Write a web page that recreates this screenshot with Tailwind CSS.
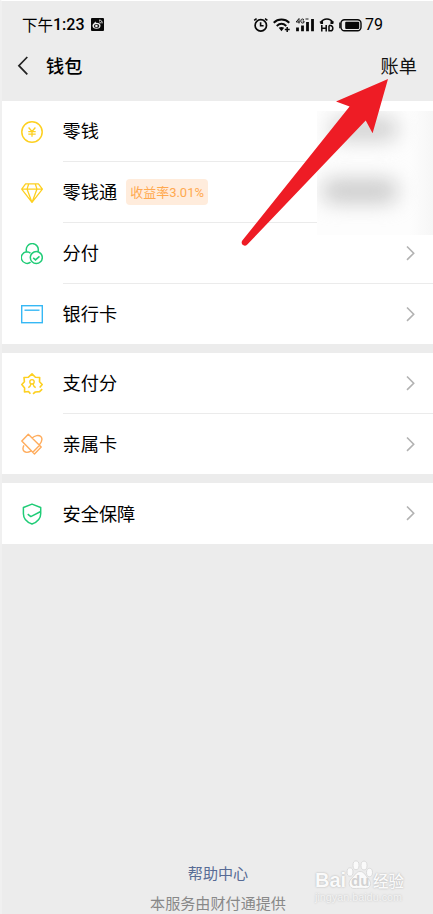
<!DOCTYPE html>
<html lang="zh-CN">
<head>
<meta charset="utf-8">
<title>钱包</title>
<script src="https://cdn.jsdelivr.net/npm/@tailwindcss/browser@4"></script>
</head>
<body class="bg-[#ececec]">
<div class="relative flex h-[914px] w-[433px] flex-col overflow-hidden border-t border-l-2 border-t-white border-l-[#f0f0f0] bg-[#ececec] font-['Noto_Sans_CJK_SC',sans-serif] text-black">
  <!-- status bar -->
  <div class="flex h-[46px] shrink-0 items-center pt-[1px] pl-[20px]">
    <div class="flex w-[63px] items-center whitespace-nowrap text-[15.5px] leading-6"><span class="pb-[1px]">下午</span><span class="font-[Roboto] text-[16px] font-medium">1:23</span></div>
    <svg class="ml-[6px] size-[13px]" viewBox="0 0 13 13" fill="none"><rect width="13" height="13" rx="1" fill="#080808"/><ellipse cx="5.5" cy="7.8" rx="4" ry="3" fill="#eee"/><ellipse cx="5.6" cy="8" rx="2.7" ry="2" fill="#111"/><circle cx="5.4" cy="8" r="1.3" fill="#eee"/><path d="M8 2.2c2-.4 3.5 1 3 3.2M8.2 4c1-.1 1.4.4 1.2 1.3M3 5.5l2-1.6" stroke="#eee"/></svg>
    <div class="ml-[149px] flex items-center text-black">
      <svg class="h-[16px] w-[112px]" viewBox="0 0 112 16" fill="none" stroke="#080808">
        <g stroke-width="1.7"><circle cx="7.8" cy="8.4" r="5.7"/><path d="M7.6 5.2v3.6h3" stroke-width="1.6"/><path d="M1.2 3.4 3.6 1.6M12 1.6l2.4 1.8" stroke-width="1.5"/></g>
        <path d="M20.7 5.7c4.3-4.2 11.3-4.2 15.6 0M23.7 9c2.9-2.6 6.7-2.6 9.6 0" stroke-width="1.9"/><path d="M25.7 10.8c1.8-1.2 3.7-1.2 5.5 0l-2.7 3.4z" fill="#080808" stroke="none"/><path d="M34.2 10v5M31.8 12.5h4.9" stroke-width="1.5"/>
        <path d="M44.5 10.5V14.3M49.5 8.5V14.3M54.5 5V14.3M59.5 2V14.3" stroke-width="2.8"/>
        <path d="M46 1.5 43.2 5h3.6M46 1.5v5M51 2.7c-1.7-1.5-3.2-.5-3.2 1.3 0 2 1.8 2.7 3.2 1.5V4h-1.4M52.5 2h3" stroke-width=".9"/>
        <path d="M68.1 7V5.2c2.4-4.2 9.2-4.2 11.5 0V7M66.8 5.1h2.5v2M78.2 7V5h2.5" stroke-width="1.5"/>
        <path d="M68.8 8v6.5M73.2 8v6.5M68.8 11.2h4.4M76 8.6v5.2h1.5c3.1 0 3.1-5.2 0-5.2H76" stroke-width="1.5"/>
        <rect x="88" y="2.8" width="20" height="11" rx="3.5" stroke-width="1.4"/><path d="M86.9 5.5v5.7" stroke-width="1.4"/><rect x="92.2" y="4.7" width="14" height="7.2" rx="1" fill="#080808" stroke="none"/>
      </svg>
      <span class="font-[Roboto] text-[16px] leading-5">79</span>
    </div>
  </div>
  <!-- title bar -->
  <div class="flex h-[54px] shrink-0 items-start justify-between pr-[16px] pl-[15px] pt-[4px]">
    <div class="flex items-center">
      <svg class="mt-[1px] h-[20px] w-[12px]" viewBox="0 0 12 20" fill="none" stroke="#222" stroke-width="1.7"><path d="m10.3 1-8.4 8.7 8.4 8.7"/></svg>
      <h1 class="ml-[17px] text-[18.2px] leading-[28px] font-medium">钱包</h1>
    </div>
    <span class="text-[18.2px] leading-[28px] text-[#111]">账单</span>
  </div>

  <!-- balance card -->
  <section class="relative h-[243px] shrink-0 bg-white">
    <div class="flex h-[61px] items-center pl-[19px]">
      <svg class="size-[22px]" viewBox="0 0 22 22" fill="none" stroke="#fdd021" stroke-width="1.5"><circle cx="11" cy="11" r="10.2"/><path d="m7.6 6.5 3.4 4 3.4-4M11 10.5v5.3M7.3 10.7h7.4M7.3 13.1h7.4" stroke-width="1.3"/></svg>
      <div class="ml-[19.5px] flex h-full flex-1 items-center border-b border-[#ebebeb] pb-[1px] text-[18.2px]">零钱</div>
    </div>
    <div class="flex h-[61px] items-center pl-[19px]">
      <svg class="size-[22px]" viewBox="0 0 22 22" fill="none" stroke="#fdd021" stroke-width="1.3" stroke-linejoin="round"><path d="M4.6 1.8h12.8l4 5.3L11 20.4.7 7.1zM.7 7.1h20.7M7.8 1.8 6 7.1l5 13.3 5-13.3-1.8-5.3"/></svg>
      <div class="ml-[19.5px] flex h-full flex-1 items-center border-b border-[#ebebeb] pb-[1px] text-[18.2px]">零钱通<span class="mt-[1px] ml-[9px] flex h-[26px] w-[82px] items-center justify-center rounded-[4px] bg-[#ffecdc] text-[13px] text-[#ffa94f]"><span>收益率<span class="font-[Roboto]">3.01%</span></span></span></div>
    </div>
    <div class="flex h-[61px] items-center pl-[19px]">
      <svg class="size-[22px]" viewBox="0 0 22 22" fill="none" stroke="#20cc77" stroke-width="1.5"><path d="M5.5 8.2a6 6 0 1 1 11.4.5M9.6 19.2A5.8 5.8 0 1 1 5.5 8.8c1.6 0 3 .5 4 1.5"/><circle cx="15.3" cy="14.6" r="6"/><path d="m12.2 14.9 2.3 2 4-3.5"/></svg>
      <div class="ml-[19.5px] flex h-full flex-1 items-center justify-between border-b border-[#ebebeb] pr-[17px] text-[18.2px]"><span class="pb-[1px]">分付</span><svg class="h-[16px] w-[11px]" viewBox="0 0 11 16" fill="none" stroke="#b2b2b2" stroke-width="1.6"><path d="m2 1.5 6.7 6.7L2 14.9"/></svg></div>
    </div>
    <div class="flex h-[60px] items-center pl-[19px]">
      <svg class="size-[22px]" viewBox="0 0 22 22" fill="none" stroke="#36b8f5" stroke-width="1.4"><rect x=".7" y="2.7" width="20.6" height="17"/><path d="M3.5 7.2h15"/></svg>
      <div class="ml-[19.5px] flex h-full flex-1 items-center justify-between pr-[17px] text-[18.2px]"><span>银行卡</span><svg class="h-[16px] w-[11px]" viewBox="0 0 11 16" fill="none" stroke="#b2b2b2" stroke-width="1.6"><path d="m2 1.5 6.7 6.7L2 14.9"/></svg></div>
    </div>
    <!-- obscured amounts -->
    <div class="absolute top-[10px] left-[315px] h-[124px] w-[116px] overflow-hidden bg-linear-to-r from-[#fdfdfd] from-80% to-[#f6f6f6]">
      <div class="absolute top-[7px] left-[13px] h-[22px] w-[68px] rounded-full bg-[#cfcfcf] blur-[10px]"></div>
      <div class="absolute top-[68px] left-[5px] h-[24px] w-[76px] rounded-full bg-[#cbcbcb] blur-[10px]"></div>
    </div>
  </section>

  <section class="mt-[9px] h-[121px] shrink-0 bg-white">
    <div class="flex h-[61px] items-center pl-[19px]">
      <svg class="size-[22px]" viewBox="0 0 22 22" fill="none" stroke="#fdd021" stroke-width="1.6" stroke-linejoin="round"><path d="M9.4 20.8 7.5 18.5l-4 .5.1-4.1L.8 11.5 3.4 8.7 3 4.5l4.2-.2L11 .9l3.4 3.4 4.3.2-.2 4.2 2.7 2.8-2.5 3M12 20.8l2.3-1.8 4.3-.4 2.6-2.5"/><circle cx="11" cy="8.8" r="2.2" stroke-width="1.4"/><path d="M10 10.9c-.4 2-1.2 3-2.7 3.8M12 10.9c.4 2 1.2 3 2.7 3.8" stroke-width="1.4"/></svg>
      <div class="ml-[19.5px] flex h-full flex-1 items-center justify-between border-b border-[#ebebeb] pr-[17px] text-[18.2px]"><span class="pb-[1px]">支付分</span><svg class="h-[16px] w-[11px]" viewBox="0 0 11 16" fill="none" stroke="#b2b2b2" stroke-width="1.6"><path d="m2 1.5 6.7 6.7L2 14.9"/></svg></div>
    </div>
    <div class="flex h-[60px] items-center pl-[19px]">
      <svg class="size-[22px]" viewBox="0 0 22 22" fill="none" stroke="#ffac5c" stroke-width="1.4" stroke-linejoin="round"><path d="M7.3 1.2.8 8.1l12.7 12.8 6.7-7zM11 5.1c3-2.8 6.8-3.4 8.8-1.6 1.8 1.8 1.1 5.1-1.4 8.3M2.9 12.4c-1.2 2.4-1.2 4.7.3 6 1.5 1.3 4.1 1.1 6.7-.2M11.8 19.3l6.8-7"/></svg>
      <div class="ml-[19.5px] flex h-full flex-1 items-center justify-between pr-[17px] text-[18.2px]"><span>亲属卡</span><svg class="h-[16px] w-[11px]" viewBox="0 0 11 16" fill="none" stroke="#b2b2b2" stroke-width="1.6"><path d="m2 1.5 6.7 6.7L2 14.9"/></svg></div>
    </div>
  </section>

  <section class="mt-[9px] flex h-[61px] shrink-0 items-center bg-white pl-[19px]">
    <svg class="size-[22px]" viewBox="0 0 22 22" fill="none" stroke="#20cc77" stroke-width="1.5" stroke-linejoin="round"><path d="M19.7 9.2V4.5L11 1.1 2.4 4.5v6.2c0 4.8 3.4 8.4 8.6 10.3 5.1-1.9 8.7-5.5 8.7-10.3V8.5L9.8 13.6l-3.1-2.4"/></svg>
    <div class="ml-[19.5px] flex flex-1 items-center justify-between pr-[17px] text-[18.2px]"><span>安全保障</span><svg class="h-[16px] w-[11px]" viewBox="0 0 11 16" fill="none" stroke="#b2b2b2" stroke-width="1.6"><path d="m2 1.5 6.7 6.7L2 14.9"/></svg></div>
  </section>

  <footer class="mt-auto flex shrink-0 flex-col items-center pl-[1px] text-[15.1px]">
    <span class="leading-[30px] text-[#576b95]">帮助中心</span>
    <span class="h-[27px] leading-[30px] text-[#888]">本服务由财付通提供</span>
  </footer>

  <!-- watermark -->
  <div class="absolute top-[858px] left-[313px] h-[46px] w-[94px] text-[#fafafa] [text-shadow:0_0_2px_#aaa]">
    <svg class="absolute top-0 left-[31px] h-[31px] w-[27px]" viewBox="0 0 27 31" fill="#fafafa" stroke="#d4d4d4" stroke-width=".8"><ellipse cx="4" cy="13" rx="3" ry="4.2"/><ellipse cx="10" cy="6.3" rx="3" ry="4.4"/><ellipse cx="18" cy="6.5" rx="3" ry="4.4"/><ellipse cx="23.5" cy="13.5" rx="3" ry="4.2"/><path d="M14 12.5c-4 0-5.5 4.5-8.5 7C1 23.5 3.5 29.5 8 29.5c3 0 8-.5 11.5 0 5 0 6.8-5.8 3-9.5-3-3-4-7.5-8.5-7.5z"/></svg>
    <span class="absolute top-[12px] left-0 font-['Liberation_Sans'] text-[20px] leading-[18px] font-bold">Bai</span>
    <span class="absolute top-[14px] left-[36px] font-['Liberation_Sans'] text-[15px] leading-[15px] font-bold text-[#d2d2d2] [text-shadow:none]">du</span>
    <span class="absolute top-[12px] left-[58px] text-[15.5px] leading-[18px] font-medium whitespace-nowrap">经验</span>
    <span class="absolute top-[32px] left-0 font-['Liberation_Sans'] text-[10.8px] leading-[12px] text-[#f3f3f3] [text-shadow:0_0_2px_#bbb]">jingyan.baidu.com</span>
  </div>

  <!-- pointer arrow -->
  <svg class="absolute top-[69px] left-[223px] h-[190px] w-[208px]" viewBox="225 70 208 190" fill="#ee1c25"><path d="M388 79 372.6 133.2 365.7 120.6 247.3 244.5c-3 3-7.3-.3-5-4L349.6 106.5 336 101.4z"/></svg>
</div>
</body>
</html>
